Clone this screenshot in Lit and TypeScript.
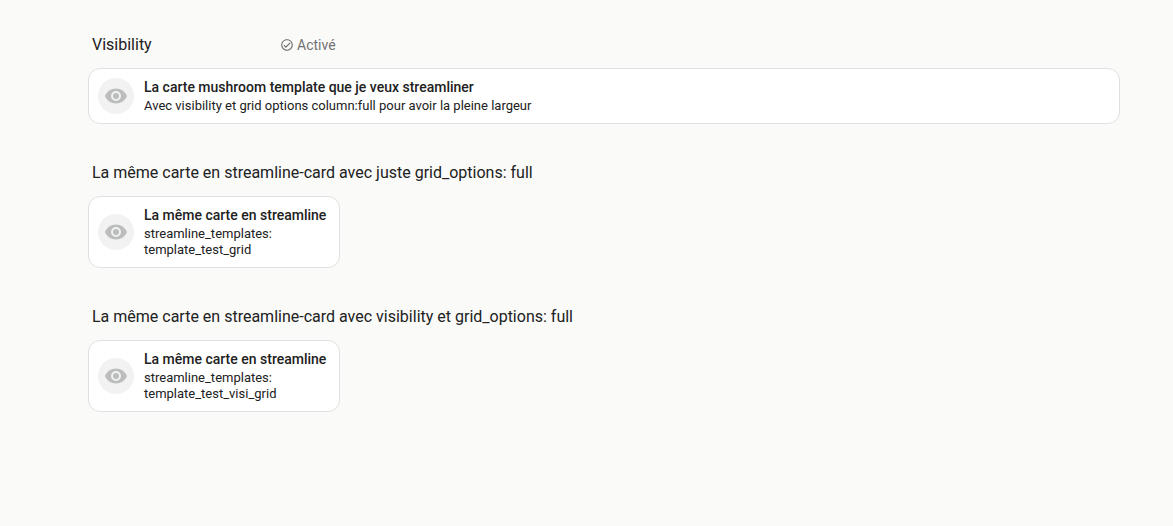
import { LitElement, html, css } from "lit";
import { customElement, property } from "lit/decorators.js";

@customElement("template-card")
class TemplateCard extends LitElement {
  @property() primary = "";
  @property({ type: Array }) secondary: string[] = [];

  static styles = css`
    :host { display: block; }
    .card {
      display: flex;
      align-items: center;
      gap: 10px;
      box-sizing: border-box;
      min-height: 56px;
      padding: 9px;
      border: 1px solid #e0e0e0;
      border-radius: 12px;
      background: #fff;
    }
    .shape {
      flex: none;
      display: grid;
      place-items: center;
      width: 36px;
      height: 36px;
      border-radius: 50%;
      background: #f2f2f2;
    }
    .shape svg { width: 24px; height: 24px; fill: #bbbebd; }
    .info {
      display: grid;
      gap: 2px;
      min-width: 0;
    }
    .primary {
      font-size: 14px;
      font-weight: 500;
      line-height: 18px;
    }
    .secondary {
      font-size: 13px;
      line-height: 16px;
    }
    .line { display: block; }
  `;

  render() {
    return html`
      <div class="card">
        <div class="shape">
          <svg viewBox="0 0 24 24" aria-hidden="true">
            <path d="M12,9A3,3 0 0,0 9,12A3,3 0 0,0 12,15A3,3 0 0,0 15,12A3,3 0 0,0 12,9M12,17A5,5 0 0,1 7,12A5,5 0 0,1 12,7A5,5 0 0,1 17,12A5,5 0 0,1 12,17M12,4.5C7,4.5 2.73,7.61 1,12C2.73,16.39 7,19.5 12,19.5C17,19.5 21.27,16.39 23,12C21.27,7.61 17,4.5 12,4.5Z" />
          </svg>
        </div>
        <div class="info">
          <div class="primary">${this.primary}</div>
          <div class="secondary">
            ${this.secondary.map((line) => html`<span class="line">${line}</span>`)}
          </div>
        </div>
      </div>
    `;
  }
}

@customElement("app-root")
class AppRoot extends LitElement {
  static styles = css`
    :host {
      display: block;
      box-sizing: border-box;
      min-height: 100vh;
      padding: 32px 53px 32px 88px;
      background: #fafaf9;
      color: #212121;
      font-family: Roboto, sans-serif;
    }
    main { display: grid; gap: 36px; }
    .heading {
      display: flex;
      align-items: center;
      min-height: 26px;
      padding: 0 4px;
      margin-bottom: 10px;
    }
    h2 {
      margin: 0;
      font-size: 16px;
      font-weight: 400;
      line-height: 24px;
    }
    .title { width: 188px; }
    .badge {
      display: flex;
      align-items: center;
      gap: 3px;
      color: #727272;
      font-size: 14px;
      line-height: 20px;
    }
    .badge svg { width: 14px; height: 14px; fill: currentColor; }
    .narrow { max-width: 252px; }
  `;

  render() {
    return html`
      <main>
        <section>
          <div class="heading">
            <h2 class="title">Visibility</h2>
            <div class="badge">
              <svg viewBox="0 0 24 24" aria-hidden="true">
                <path d="M12 2C6.5 2 2 6.5 2 12S6.5 22 12 22 22 17.5 22 12 17.5 2 12 2M12 20C7.59 20 4 16.41 4 12S7.59 4 12 4 20 7.59 20 12 16.41 20 12 20M16.59 7.58L10 14.17L7.41 11.59L6 13L10 17L18 9L16.59 7.58Z" />
              </svg>
              <span>Activé</span>
            </div>
          </div>
          <template-card
            .primary=${"La carte mushroom template que je veux streamliner"}
            .secondary=${["Avec visibility et grid options column:full pour avoir la pleine largeur"]}
          ></template-card>
        </section>
        <section>
          <div class="heading">
            <h2>La même carte en streamline-card avec juste grid_options: full</h2>
          </div>
          <template-card
            class="narrow"
            .primary=${"La même carte en streamline"}
            .secondary=${["streamline_templates:", "template_test_grid"]}
          ></template-card>
        </section>
        <section>
          <div class="heading">
            <h2>La même carte en streamline-card avec visibility et grid_options: full</h2>
          </div>
          <template-card
            class="narrow"
            .primary=${"La même carte en streamline"}
            .secondary=${["streamline_templates:", "template_test_visi_grid"]}
          ></template-card>
        </section>
      </main>
    `;
  }
}
